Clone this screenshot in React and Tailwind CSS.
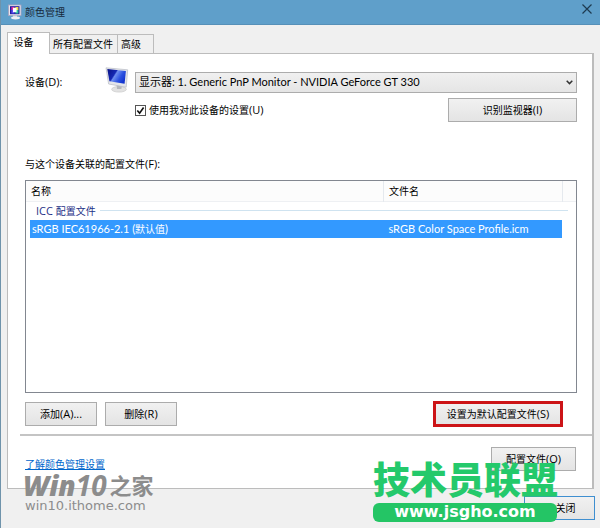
import React, { useState } from "react";

const tabs = ["设备", "所有配置文件", "高级"];

const buttonClass =
  "h-6 border border-[#acacac] bg-linear-to-b from-[#f1f1f1] to-[#e4e4e4] text-center whitespace-nowrap";

const TitleIcon = () => (
  <svg viewBox="0 0 14 16" className="w-[14px] h-4" aria-hidden="true">
    <rect x="0.5" y="1" width="12.5" height="10.5" fill="#e9e6ee" stroke="#a9a3c0" strokeWidth="0.8" />
    <rect x="2" y="2.2" width="9.5" height="8" fill="#1f1a9c" />
    <rect x="3.4" y="3" width="3" height="3" fill="#e02fa0" />
    <rect x="3.4" y="6" width="3" height="3.5" fill="#5a4bf0" />
    <rect x="7.4" y="3" width="3" height="3" fill="#f0e040" />
    <rect x="7.4" y="6" width="3" height="3.5" fill="#2fc7a0" />
    <rect x="5" y="3.8" width="3.6" height="4.4" fill="#fff" />
    <path d="M5 11.5h4v2H5z" fill="#d5d6e0" />
    <ellipse cx="7.5" cy="14" rx="4.5" ry="1.4" fill="#eeeef4" />
  </svg>
);

const MonitorIcon = () => (
  <svg viewBox="0 0 24 26" className="w-6 h-[26px] shrink-0" aria-hidden="true">
    <defs>
      <linearGradient id="screen" x1="0" y1="0.1" x2="1" y2="0.6">
        <stop offset="0" stopColor="#0a1488" />
        <stop offset="0.4" stopColor="#1528b4" />
        <stop offset="0.47" stopColor="#6f8ff0" />
        <stop offset="0.75" stopColor="#2a50e0" />
        <stop offset="1" stopColor="#1233cf" />
      </linearGradient>
    </defs>
    <ellipse cx="14" cy="22.3" rx="7.4" ry="2.8" fill="#e2e2e2" stroke="#c2c2c2" strokeWidth="0.6" />
    <path d="M11.5 17l5.5 1-0.6 4h-4.4z" fill="#b5b8bd" />
    <path d="M1 0.8l21.7 2L21.2 20.2 3.6 17z" fill="#e3e5ea" stroke="#b9bcc4" strokeWidth="0.7" />
    <path d="M2.3 2l18.6 1.9-1.3 12.8L4.4 14.2z" fill="url(#screen)" />
  </svg>
);

const App = () => {
  const [activeTab, setActiveTab] = useState("设备");
  const [useSettings, setUseSettings] = useState(true);

  return (
    <div className="relative min-h-screen overflow-hidden bg-[#f0f0f0] border-l border-[#6f93ab] text-black text-[10px] leading-4 font-['Open_Sans','Noto_Sans_CJK_SC',sans-serif]">
      <header className="flex items-center h-[25px] pl-[7px] pr-1 bg-[#5f9fca] border-b border-[#5690b8]">
        <TitleIcon />
        <h1 className="ml-[3px] flex-1 text-[#16283a]">颜色管理</h1>
        <button aria-label="关闭窗口" className="p-1 -mt-1.5">
          <svg viewBox="0 0 10 10" className="w-[10px] h-[10px]" stroke="#1e3a50" strokeWidth="1.2">
            <path d="M0.5 0.5l9 9M9.5 0.5l-9 9" />
          </svg>
        </button>
      </header>

      <main className="pt-[7px] pl-[6px] pr-[6px]">
        <div role="tablist" className="flex items-end">
          {tabs.map((tab) => (
            <button
              key={tab}
              role="tab"
              aria-selected={tab === activeTab}
              onClick={() => setActiveTab(tab)}
              className={
                tab === activeTab
                  ? "relative z-10 -mb-px h-[22px] w-[43px] pr-2.5 pb-1 bg-white border border-b-0 border-[#bcbcbc]"
                  : "h-[19px] px-[3px] pr-1 last:pr-3 border border-l-0 border-b-0 border-[#bcbcbc]"
              }
            >
              {tab}
            </button>
          ))}
        </div>

        <section className="bg-white border border-r-2 border-[#bcbcbc] pt-[13px] pb-4">
          <div className="pl-[17px] pr-[15px]">
            <div className="flex items-center">
              <label htmlFor="device" className="w-20 pt-1">
                设备<span className="text-[11px]">(D):</span>
              </label>
              <MonitorIcon />
              <div className="relative flex-1 ml-[6px] mt-1">
                <select
                  id="device"
                  className="appearance-none block w-full h-[21px] pl-[3px] border border-[#acacac] bg-linear-to-b from-[#f0f0f0] to-[#e5e5e5] text-[11px] font-['Lato','Noto_Sans_CJK_SC',sans-serif]"
                >
                  <option>显示器: 1. Generic PnP Monitor - NVIDIA GeForce GT 330</option>
                </select>
                <svg viewBox="0 0 7 5" className="absolute right-1 top-2 w-[7px] h-[5px] pointer-events-none" fill="none" stroke="#333" strokeWidth="1.5">
                  <path d="M0.7 0.8l2.8 2.8 2.8-2.8" />
                </svg>
              </div>
            </div>

            <div className="flex items-center mt-[5px] pl-[110px]">
              <span className="relative flex">
                <input
                  id="use-settings"
                  type="checkbox"
                  checked={useSettings}
                  onChange={(e) => setUseSettings(e.target.checked)}
                  className="appearance-none w-[11px] h-[11px] border border-[#555] bg-white"
                />
                {useSettings && (
                  <svg viewBox="0 0 11 11" className="absolute inset-0 w-[11px] h-[11px] pointer-events-none" fill="none" stroke="#111" strokeWidth="1.6">
                    <path d="M2.3 5.5l2.3 2.6 4-5.6" />
                  </svg>
                )}
              </span>
              <label htmlFor="use-settings" className="ml-[3px] flex-1">
                使用我对此设备的设置<span className="text-[11px]">(U)</span>
              </label>
              <button className={`${buttonClass} w-[129px]`}>
                识别监视器<span className="text-[11px]">(I)</span>
              </button>
            </div>

            <h2 className="mt-[34px]">
              与这个设备关联的配置文件<span className="text-[11px]">(F):</span>
            </h2>

            <div className="mt-2 h-[213px] border border-[#828790] bg-white">
              <table className="w-full table-fixed border-collapse text-left">
                <colgroup>
                  <col className="w-[65%]" />
                  <col />
                  <col className="w-[14px]" />
                </colgroup>
                <thead>
                  <tr className="h-5 bg-[#fcfcfc] border-b border-[#eef0f3]">
                    <th className="p-0 pl-[5px] font-normal border-r border-[#e5e9ee]">名称</th>
                    <th className="p-0 pl-[5px] font-normal border-r border-[#e5e9ee]">文件名</th>
                    <td className="p-0"></td>
                  </tr>
                </thead>
                <tbody>
                  <tr className="h-[19px] text-[#1e3287]">
                    <td colSpan={3} className="p-0 pl-[10px] pr-2">
                      <div className="flex items-center gap-1">
                        <span>
                          <span className="text-[11px]">ICC </span>配置文件
                        </span>
                        <span className="flex-1 h-px bg-[#cfe3f0]"></span>
                      </div>
                    </td>
                  </tr>
                  <tr className="text-white text-[11px] font-['Lato','Noto_Sans_CJK_SC',sans-serif]">
                    <td className="p-0 pl-1">
                      <div className="h-[18px] leading-[18px] pl-[2px] bg-[#3399ff]">
                        sRGB IEC61966-2.1 (<span className="text-[10px]">默认值</span>)
                      </div>
                    </td>
                    <td className="p-0">
                      <div className="h-[18px] leading-[18px] pl-[5px] bg-[#3399ff]">sRGB Color Space Profile.icm</div>
                    </td>
                    <td className="p-0"></td>
                  </tr>
                </tbody>
              </table>
            </div>

            <div className="flex items-center mt-2 pr-[14px]">
              <button className={`${buttonClass} w-[72px]`}>
                添加<span className="text-[11px]">(A)...</span>
              </button>
              <button className={`${buttonClass} w-[72px] ml-2`}>
                删除<span className="text-[11px]">(R)</span>
              </button>
              <button className="ml-auto h-[26px] w-[130px] border-3 border-[#cc1417] bg-linear-to-b from-[#f1f1f1] to-[#e4e4e4] whitespace-nowrap">
                设置为默认配置文件<span className="text-[11px]">(S)</span>
              </button>
            </div>
          </div>

          <hr className="mt-[7px] ml-3 border-t-2 border-[#c4c4c4]" />

          <div className="flex items-start justify-between mt-[11px] pl-[17px] pr-4">
            <a href="#learn" className="mt-[9px] text-[#0066cc] underline">
              了解颜色管理设置
            </a>
            <button className={`${buttonClass} w-[85px]`}>
              配置文件<span className="text-[11px]">(O)</span>
            </button>
          </div>
        </section>

        <div className="flex justify-end mt-[7px] -mr-px">
          <button className="h-6 w-[71px] pl-3 border border-[#3f8fd0] bg-linear-to-b from-[#f1f1f1] to-[#e4e4e4]">关闭</button>
        </div>
      </main>

      {/* site marks laid over the dialog */}
      <div className="absolute left-[22px] bottom-[14px] text-[#8c8c8c] whitespace-nowrap">
        <div className="flex items-center h-[26px]">
          <span className="text-[28px] font-extrabold italic">Win</span>
          <span className="text-[28px] font-bold italic">10</span>
          <span className="ml-[3px] text-[22px] font-bold">之家</span>
        </div>
        <div className="ml-[2px] text-[13px] leading-[16px] font-['DejaVu_Sans',sans-serif]">win10.ithome.com</div>
      </div>
      <div className="absolute right-[43px] bottom-[6px] w-[184px] text-center whitespace-nowrap">
        <div className="h-[42px] leading-[34px] text-[37px] font-black text-[#24c96b] font-['Noto_Sans_CJK_SC',sans-serif]">技术员联盟</div>
        <div className="h-[19px] leading-[17px] rounded-md bg-[#24c565] text-white text-[16px] font-bold font-['DejaVu_Sans',sans-serif]">
          www.jsgho.com
        </div>
      </div>
    </div>
  );
};

export default App;
